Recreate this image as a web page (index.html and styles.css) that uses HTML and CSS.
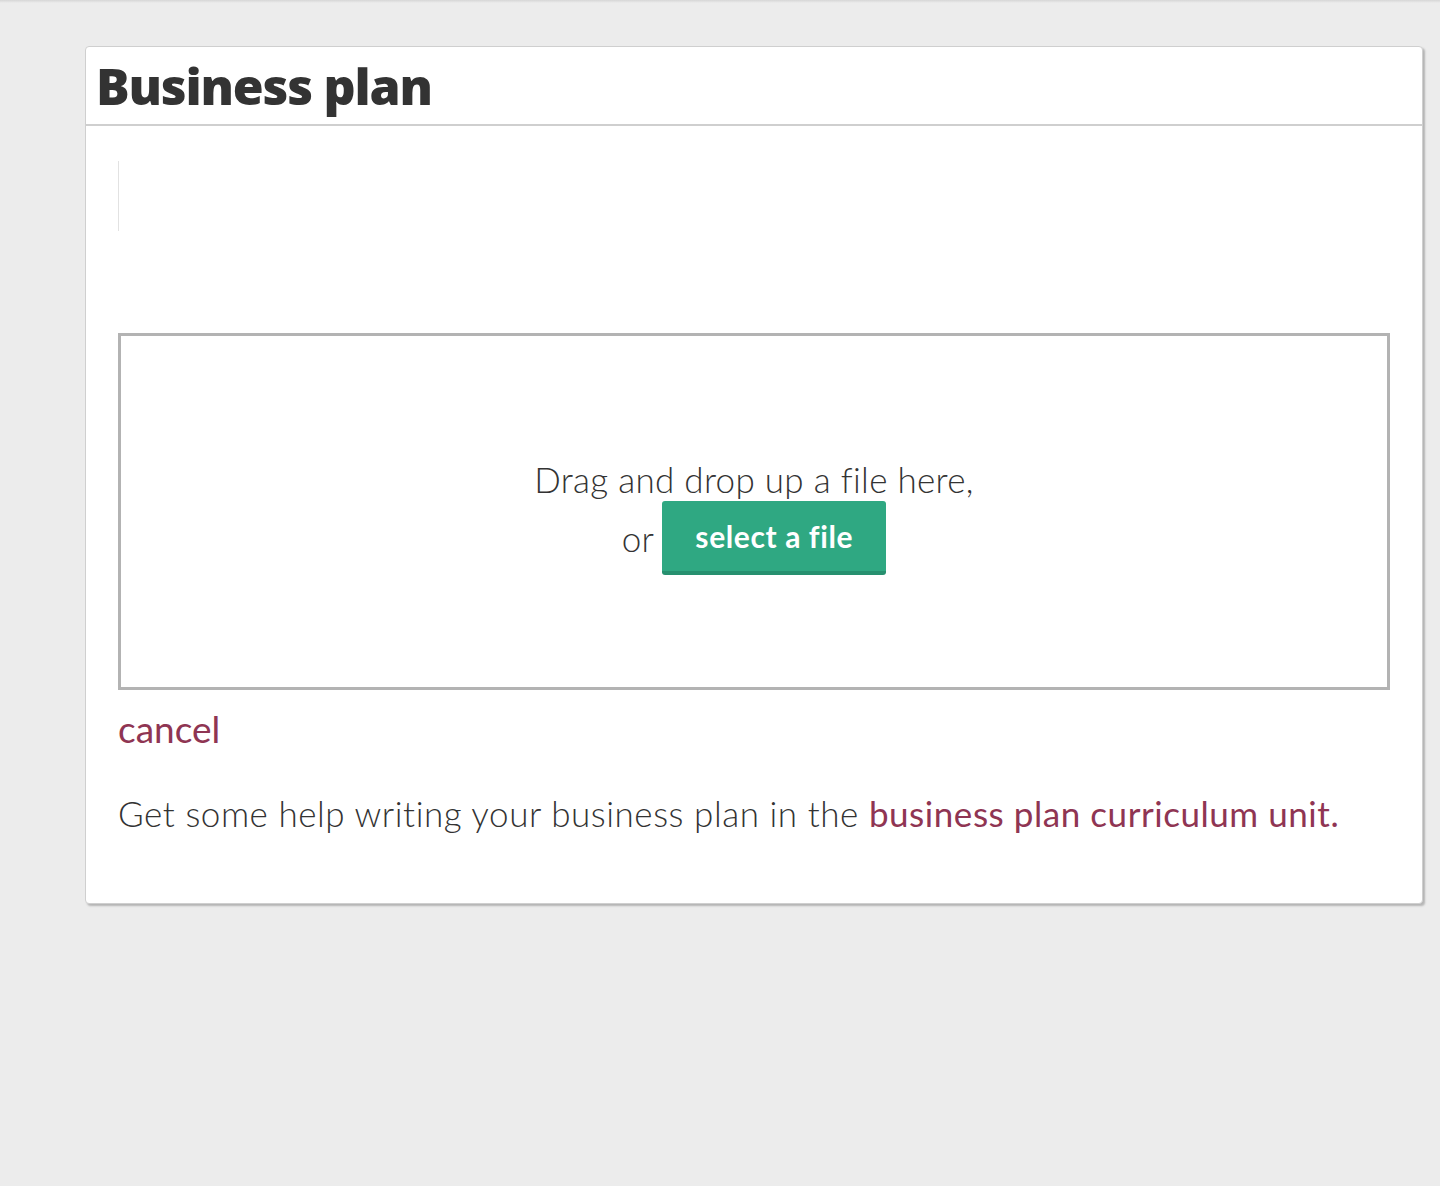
FILE: index.html
```html
<!DOCTYPE html>
<html>
<head>
<meta charset="utf-8">
<link rel="stylesheet" href="styles.css">
</head>
<body>
<div class="topshade"></div>
<div class="page">
  <div class="card">
    <div class="card-header">
      <h1 class="title">Business plan</h1>
    </div>
    <div class="card-body">
      <div class="editor"></div>
      <div class="dropzone">
        <div class="drop-line">Drag and drop up a file here,</div>
        <div class="drop-line second">or <span class="btn">select a file</span></div>
      </div>
      <a class="cancel">cancel</a>
      <p class="help">Get some help writing your business plan in the <a class="link">business plan curriculum unit.</a></p>
    </div>
  </div>
</div>
</body>
</html>
```
FILE: styles.css
```css
html, body {
  margin: 0;
  padding: 0;
  background: #ececec;
  height: 100%;
}
body {
  font-family: Lato, "Open Sans", sans-serif;
  font-variant-ligatures: none;
  color: #333;
}
.topshade {
  height: 3px;
  background: linear-gradient(#d6d6d6, #ececec);
}
.page {
  padding: 43px 0 0 85px;
}
.card {
  width: 1336px;
  background: #fff;
  border: 1px solid #cfcfcf;
  border-radius: 4px;
  box-shadow: 2px 2px 2px #b5b5b5;
}
.card-header {
  height: 77px;
  border-bottom: 2px solid #cfcfcf;
  padding: 0 10px;
  display: flex;
  align-items: center;
}
.title {
  margin: 0;
  font-family: "Open Sans", Lato, sans-serif;
  font-weight: 800;
  font-size: 50px;
  letter-spacing: -1.2px;
  color: #333;
  line-height: 1;
}
.card-body {
  padding: 35px 32px 68px;
}
.editor {
  height: 70px;
  border-left: 1px solid #e2e2e2;
  margin-bottom: 102px;
}
.dropzone {
  height: 341px;
  border: 3px solid #b3b3b3;
  display: flex;
  flex-direction: column;
  align-items: center;
  justify-content: center;
  padding-top: 10px;
  box-sizing: content-box;
  font-weight: 300;
  font-size: 35px;
  letter-spacing: 0.3px;
  color: #333;
}
.drop-line {
  line-height: 40px;
}
.drop-line.second {
  display: flex;
  align-items: center;
  margin-top: 2px;
}
.btn {
  display: inline-block;
  margin-left: 8px;
  background: #2fa882;
  border-bottom: 4px solid #27906f;
  border-radius: 3px;
  color: #fff;
  font-weight: 700;
  font-size: 30px;
  letter-spacing: 0.6px;
  width: 224px;
  height: 70px;
  line-height: 70px;
  text-align: center;
}
.cancel {
  display: block;
  margin-top: 17px;
  color: #8f3553;
  font-size: 37px;
  line-height: 44px;
}
.help {
  margin: 40px 0 0;
  font-weight: 300;
  font-size: 35px;
  letter-spacing: 0.55px;
  line-height: 44px;
}
.link {
  color: #8f3553;
  font-weight: 400;
}
```
